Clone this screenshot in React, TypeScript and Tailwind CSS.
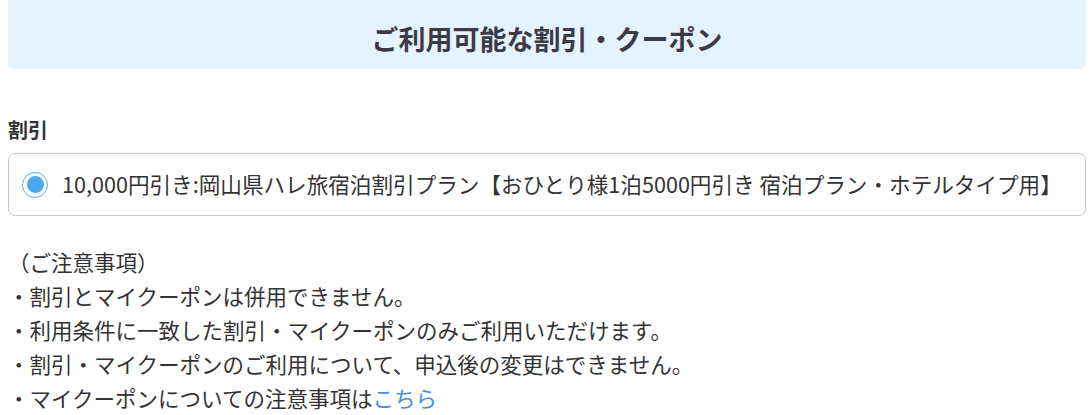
import React from 'react'

const notes = [
  '割引とマイクーポンは併用できません。',
  '利用条件に一致した割引・マイクーポンのみご利用いただけます。',
  '割引・マイクーポンのご利用について、申込後の変更はできません。',
]

export default function App() {
  return (
    <div
      className="w-[1090px] h-[415px] overflow-hidden bg-white text-[#333] [text-spacing-trim:space-all]"
      style={{ fontFamily: '"Noto Sans CJK JP", "Noto Sans", sans-serif' }}
    >
      {/* --- 見出し --- */}
      <div className="ml-2 mr-1 h-[69px] rounded-b-md bg-[#e4f3fd] flex items-center justify-center pt-[7px]">
        <h2 className="text-[27px] font-bold text-[#3b3b45] leading-none">ご利用可能な割引・クーポン</h2>
      </div>

      {/* --- 割引 --- */}
      <div className="ml-2 mr-1 mt-[49px]">
        <h3 className="text-[20px] font-bold leading-[24px] text-[#333]">割引</h3>
        <label className="mt-[11px] h-[63px] flex items-center gap-[14px] border border-[#c8c8c8] rounded-[7px] pl-[13px]">
          <span className="w-[26px] h-[26px] rounded-full border-[1.5px] border-[#5aaef0] flex items-center justify-center">
            <span className="w-[17px] h-[17px] rounded-full bg-[#4aa8ef]" />
          </span>
          <span className="text-[21.6px] leading-none text-[#333] pb-[2px]">
            10,000円引き:岡山県ハレ旅宿泊割引プラン【おひとり様1泊5000円引き 宿泊プラン・ホテルタイプ用】
          </span>
        </label>
      </div>

      {/* --- ご注意事項 --- */}
      <div className="ml-2 mt-[29px] text-[21.5px] leading-[34px] text-[#333]">
        <p>（ご注意事項）</p>
        {notes.map((n) => (
          <p key={n}>・{n}</p>
        ))}
        <p>
          ・マイクーポンについての注意事項は<a className="text-[#4a8fe8]">こちら</a>
        </p>
      </div>
    </div>
  )
}
